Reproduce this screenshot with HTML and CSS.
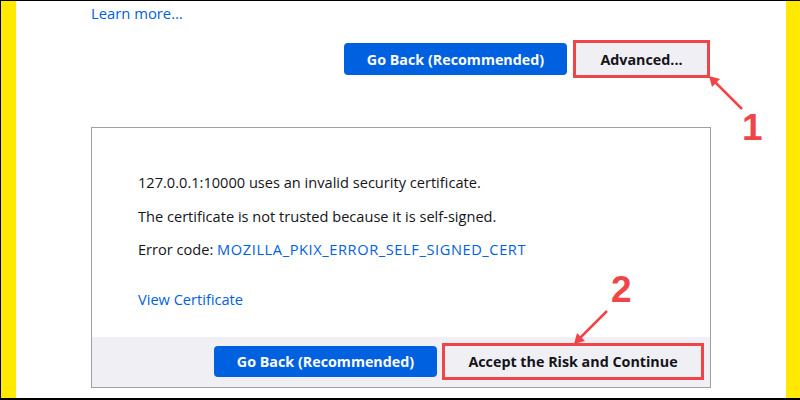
FILE: index.html
```html
<!DOCTYPE html>
<html>
<head>
	<title>Warning: Potential Security Risk Ahead</title>
	<link rel="stylesheet" href="styles.css">
</head>
<body>
<div class="frame">
	<div class="stripe"></div>
	<div class="page">
		<p class="learn"><a href="#">Learn more…</a></p>
		<div class="actions">
			<button class="primary">Go Back (Recommended)</button>
			<button class="secondary marked">Advanced...</button>
		</div>
		<div class="advanced">
			<div class="details">
				<p>127.0.0.1:10000 uses an invalid security certificate.</p>
				<p>The certificate is not trusted because it is self-signed.</p>
				<p>Error code: <a href="#" class="code">MOZILLA_PKIX_ERROR_SELF_SIGNED_CERT</a></p>
				<p class="view"><a href="#">View Certificate</a></p>
			</div>
			<div class="footer">
				<button class="primary">Go Back (Recommended)</button>
				<button class="secondary marked wide">Accept the Risk and Continue</button>
			</div>
		</div>
	</div>
	<div class="stripe right"></div>

	<!-- annotations -->
	<svg class="arrow one" width="40" height="40" viewBox="0 0 40 40">
		<line x1="34" y1="34" x2="4" y2="4" stroke="#f04548" stroke-width="2.5"/>
		<polygon points="1,1 12,4 4,12" fill="#f04548"/>
	</svg>
	<span class="step one">1</span>
	<svg class="arrow two" width="40" height="40" viewBox="0 0 40 40">
		<line x1="35" y1="5" x2="5" y2="35" stroke="#f04548" stroke-width="2.5"/>
		<polygon points="2,38 5,27 13,35" fill="#f04548"/>
	</svg>
	<span class="step two">2</span>
</div>
</body>
</html>
```

FILE: styles.css
```css
*{
	padding: 0px;
	margin: 0px;
	box-sizing: border-box;
}
body{
	font-family: "Open Sans", "Noto Sans", sans-serif;
	font-size: 14px;
	color: #15141a;
	background: #fff;
}
a{
	color: #0061e0;
	text-decoration: none;
}
.frame{
	position: relative;
	display: flex;
	width: 800px;
	height: 400px;
	border-top: 1px solid #000;
	border-left: 1px solid #000;
	border-bottom: 2px solid #000;
	overflow: hidden;
}
.stripe{
	width: 15px;
	background: #ffe900;
}
.stripe.right{
	width: 14px;
}
.page{
	flex: 1;
	background: #fff;
	padding-left: 75px;
}
.learn{
	line-height: 20px;
	margin-top: 2px;
	font-size: 14.8px;
}
.actions{
	width: 616px;
	display: flex;
	justify-content: flex-end;
	gap: 9px;
	margin-top: 20px;
}
button{
	font-family: inherit;
	font-size: 14.3px;
	font-weight: bold;
	height: 32px;
	border: none;
	border-radius: 4px;
	padding: 0 10px;
}
.primary{
	background: #0061e0;
	color: #fbfbfe;
	width: 223px;
}
.secondary{
	background: #f0f0f4;
	color: #15141a;
	width: 131px;
}
.secondary.wide{
	width: 256px;
}
.marked{
	border-radius: 0;
	outline: 3px solid #f04548;
}
.advanced{
	width: 620px;
	height: 261px;
	margin-top: 52px;
	border: 1px solid #9f9fa4;
	display: flex;
	flex-direction: column;
}
.details{
	flex: 1;
	padding: 44px 46px 0;
	font-size: 14.6px;
}
.details p{
	line-height: 20px;
	margin-bottom: 13.5px;
}
.details .code{
	letter-spacing: 0.6px;
}
.details .view{
	margin-top: 30px;
}
.footer{
	height: 50px;
	background: #f0f0f4;
	display: flex;
	justify-content: flex-end;
	align-items: flex-start;
	gap: 8px;
	padding: 9px 9px 0 0;
}
.footer .primary{
	height: 31px;
}
.footer .secondary{
	height: 31px;
}
.arrow{
	position: absolute;
}
.arrow.one{
	left: 707px;
	top: 74px;
}
.arrow.two{
	left: 571px;
	top: 305px;
}
.step{
	position: absolute;
	color: #f04548;
	font-family: "Liberation Sans", Arial, sans-serif;
	font-weight: bold;
	font-size: 37px;
	line-height: 1;
}
.step.one{
	left: 741px;
	top: 108px;
}
.step.two{
	left: 610px;
	top: 270px;
}
```
